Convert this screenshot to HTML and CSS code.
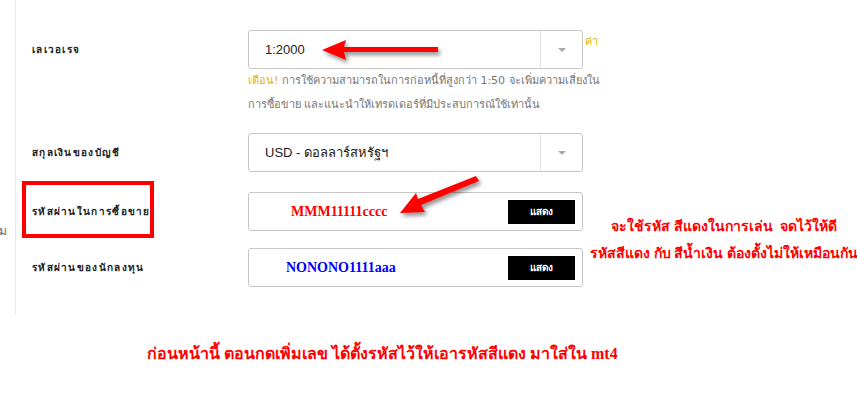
FILE: index.html
```html
<!DOCTYPE html>
<html lang="th">
<head>
    <meta charset="UTF-8" />
    <title>บัญชีใหม่</title>
    <link rel="stylesheet" href="styles.css">
</head>
<body>
    <div class="page">
        <div class="side">
            <span class="side-char">ม</span>
        </div>

        <div class="form">
            <div class="row first">
                <div class="label">เลเวอเรจ</div>
                <div class="field">
                    <div class="select">
                        <span class="value">1:2000</span>
                        <span class="caret-box"><span class="caret"></span></span>
                    </div>
                    <span class="peek">ค่า</span>
                    <p class="hint"><span class="warn">เตือน!</span> การใช้ความสามารถในการก่อหนี้ที่สูงกว่า 1:50 จะเพิ่มความเสี่ยงใน<br>การซื้อขาย และแนะนำให้เทรดเดอร์ที่มีประสบการณ์ใช้เท่านั้น</p>
                </div>
            </div>

            <div class="row currency">
                <div class="label">สกุลเงินของบัญชี</div>
                <div class="field">
                    <div class="select">
                        <span class="value">USD - ดอลลาร์สหรัฐฯ</span>
                        <span class="caret-box"><span class="caret"></span></span>
                    </div>
                </div>
            </div>

            <div class="row trade-pass">
                <div class="label">รหัสผ่านในการซื้อขาย</div>
                <div class="field">
                    <div class="password">
                        <span class="pass red">MMM11111cccc</span>
                        <button class="show">แสดง</button>
                    </div>
                </div>
            </div>

            <div class="row invest-pass">
                <div class="label">รหัสผ่านของนักลงทุน</div>
                <div class="field">
                    <div class="password">
                        <span class="pass blue">NONONO1111aaa</span>
                        <button class="show">แสดง</button>
                    </div>
                </div>
            </div>
        </div>

        <div class="note">
            <p>จะใช้รหัส สีแดงในการเล่น &nbsp;จดไว้ให้ดี</p>
            <p>รหัสสีแดง กับ สีน้ำเงิน ต้องตั้งไม่ให้เหมือนกัน</p>
        </div>

        <p class="bottom-note">ก่อนหน้านี้ ตอนกดเพิ่มเลข ได้ตั้งรหัสไว้ให้เอารหัสสีแดง มาใส่ใน mt4</p>

        <!-- annotations drawn on top of the screenshot -->
        <div class="mark-box"></div>
        <svg class="arrows" width="857" height="406" viewBox="0 0 857 406">
            <defs>
                <filter id="shadow" x="-20%" y="-50%" width="140%" height="200%">
                    <feDropShadow dx="2" dy="3" stdDeviation="2" flood-color="#000" flood-opacity="0.45" />
                </filter>
            </defs>
            <g fill="#f00" filter="url(#shadow)">
                <polygon points="438,47 438,52 344,52 346,60 322,50 346,40 344,47" />
                <polygon points="476,176 479,181 421,205 425,212 400,213 416,193 418,199" />
            </g>
        </svg>
    </div>
</body>
</html>
```

FILE: styles.css
```css
body {
    margin: 0;
    background: #fff;
    font-family: Tahoma, "DejaVu Sans", sans-serif;
    color: #333;
}
.page {
    position: relative;
    width: 857px;
    height: 406px;
    overflow: hidden;
    display: flex;
    align-items: flex-start;
}
.side {
    width: 15px;
    height: 315px;
    border-right: 1px solid #e8e8e8;
    flex-shrink: 0;
}
.side-char {
    display: block;
    margin-top: 221px;
    margin-left: -1px;
    font-size: 12px;
    color: #666;
}
.form {
    padding-left: 16px;
    width: 568px;
    flex-shrink: 0;
}
.row {
    display: flex;
    align-items: flex-start;
}
.row.first {
    margin-top: 30px;
}
.row.currency {
    margin-top: 16px;
}
.row.trade-pass {
    margin-top: 20px;
}
.row.invest-pass {
    margin-top: 17px;
}
.label {
    width: 216px;
    height: 39px;
    display: flex;
    align-items: center;
    font-size: 10px;
    font-weight: bold;
    letter-spacing: 1.3px;
    color: #222;
    flex-shrink: 0;
}
.field {
    position: relative;
    width: 335px;
}
.select,
.password {
    box-sizing: border-box;
    height: 39px;
    border: 1px solid #c6c6c6;
    border-radius: 3px;
    display: flex;
    align-items: center;
    background: #fff;
}
.value {
    flex: 1;
    padding-left: 16px;
    font-family: Arial, "Liberation Sans", sans-serif;
    font-size: 13px;
    color: #222;
}
.caret-box {
    width: 41px;
    height: 100%;
    border-left: 1px solid #e4e4e4;
    display: flex;
    align-items: center;
    justify-content: center;
}
.caret {
    width: 0;
    height: 0;
    border-left: 4px solid transparent;
    border-right: 4px solid transparent;
    border-top: 4px solid #aaa;
}
.peek {
    position: absolute;
    left: 337px;
    top: 2px;
    font-size: 11px;
    color: #e0b400;
}
.hint {
    margin: 0;
    font-size: 11px;
    line-height: 24px;
    color: #777;
    white-space: nowrap;
}
.warn {
    color: #e6b400;
}
.pass {
    flex: 1;
    font-family: "Liberation Serif", serif;
    font-weight: bold;
    font-size: 14px;
}
.pass.red {
    padding-left: 42px;
    color: #f00;
}
.pass.blue {
    padding-left: 37px;
    color: #00f;
}
.show {
    width: 67px;
    height: 24px;
    margin-right: 7px;
    border: none;
    background: #000;
    color: #fff;
    font-family: Tahoma, "DejaVu Sans", sans-serif;
    font-size: 10px;
    font-weight: bold;
    padding: 0;
}
.note {
    margin-top: 213px;
    margin-left: -10px;
    text-align: center;
    font-family: "Liberation Serif", serif;
    font-weight: bold;
    font-size: 14px;
    color: #f00;
    white-space: nowrap;
}
.note p {
    margin: 0;
    line-height: 27px;
}
.bottom-note {
    position: absolute;
    left: 147px;
    top: 341px;
    margin: 0;
    font-family: "Liberation Serif", serif;
    font-weight: bold;
    font-size: 16px;
    color: #f00;
    white-space: nowrap;
}
.mark-box {
    position: absolute;
    left: 22px;
    top: 181px;
    width: 124px;
    height: 49px;
    border: 4px solid #f00;
}
.arrows {
    position: absolute;
    left: 0;
    top: 0;
    pointer-events: none;
}
```
